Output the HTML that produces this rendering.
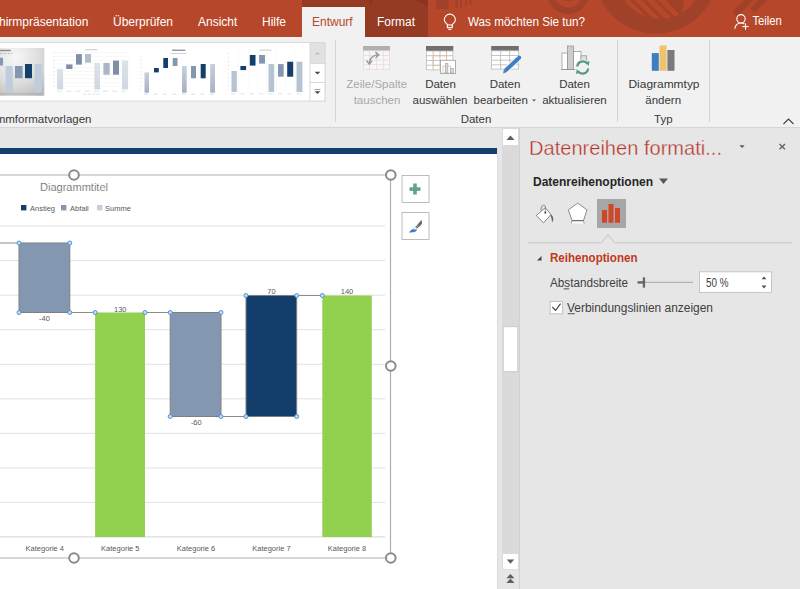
<!DOCTYPE html>
<html><head><meta charset="utf-8">
<style>
*{margin:0;padding:0}
html,body{width:800px;height:589px;overflow:hidden;background:#e6e6e6}
svg{display:block;font-family:"Liberation Sans",sans-serif}
</style></head><body>
<svg width="800" height="589" viewBox="0 0 800 589">
<!-- ================= TAB BAR ================= -->
<rect x="0" y="0" width="800" height="37" fill="#b7472a"/>
<defs><clipPath id="inner"><circle cx="660" cy="-24" r="43"/></clipPath></defs>
<g fill="#a0412a">
  <!-- big disc -->
  <circle cx="656" cy="-27.8" r="61.5"/>
  <!-- small ring -->
  <path d="M547.5,-6.5 a20.7,20.7 0 1,0 41.4,0 a20.7,20.7 0 1,0 -41.4,0 Z M554.2,-6.5 a14,14 0 1,1 28,0 a14,14 0 1,1 -28,0 Z" fill-rule="evenodd"/>
  <circle cx="568.2" cy="-6.5" r="7.6"/>
  <!-- small vertical stripes -->
  <rect x="436.3" y="0" width="12" height="9"/>
  <rect x="455.5" y="0" width="2" height="8"/>
  <rect x="460" y="0" width="2" height="7"/>
  <rect x="465" y="0" width="2" height="6"/>
  <rect x="469.5" y="0" width="2" height="5"/>
</g>
<g clip-path="url(#inner)" stroke="#b7472a" stroke-width="5.3" fill="none">
  <line x1="622" y1="-4" x2="646" y2="20"/>
  <line x1="634" y1="-4" x2="658" y2="20"/>
  <line x1="646" y1="-4" x2="670" y2="20"/>
  <line x1="657.5" y1="-4" x2="681.5" y2="20"/>
  <polygon points="684,-2 710,-2 682,12" fill="#b7472a" stroke="none"/>
</g>
<g stroke="#a0412a" stroke-width="6.5" fill="none">
  <line x1="753" y1="-4" x2="734.5" y2="14.5"/>
  <line x1="767" y1="-4" x2="752.5" y2="10.5"/>
</g>
<!-- contextual tab group -->
<rect x="302" y="0" width="126" height="37" fill="#963b23"/>
<polygon points="369,0 372.5,0 372.5,4 369,4" fill="#8a3520"/>
<polygon points="414,0 428,0 428,6" fill="#8a3520"/>
<!-- selected tab -->
<rect x="302" y="7" width="63" height="31" fill="#f1f1f1"/>
<g font-size="12" fill="#ffffff">
  <text x="-1" y="26">hirmpräsentation</text>
  <text x="113" y="26">Überprüfen</text>
  <text x="198" y="26">Ansicht</text>
  <text x="262" y="26">Hilfe</text>
  <text x="312" y="26" fill="#b7472a">Entwurf</text>
  <text x="377" y="26">Format</text>
  <text x="468" y="26" textLength="117" lengthAdjust="spacingAndGlyphs">Was möchten Sie tun?</text>
  <text x="752.4" y="25.3" textLength="29.5" lengthAdjust="spacingAndGlyphs">Teilen</text>
</g>
<!-- bulb -->
<g fill="none" stroke="#fff" stroke-width="1.1">
  <path d="M447.4,25.4 L447.3,24.6 C446.6,23.4 444.3,22.3 444.3,19.7 A5.55,5.55 0 0 1 455.4,19.7 C455.4,22.3 453.1,23.4 452.4,24.6 L452.3,25.4"/>
  <rect x="447.4" y="25" width="4.9" height="2.6"/>
  <line x1="448.3" y1="29.4" x2="451.4" y2="29.4"/>
</g>
<!-- person -->
<g fill="none" stroke="#fff" stroke-width="1.1">
  <circle cx="741" cy="18.8" r="4.2"/>
  <path d="M734.8,28.8 C735.3,25 738,23 741.2,23 C742.6,23 743.6,23.4 744.4,24"/>
  <line x1="742.3" y1="26.6" x2="748.7" y2="26.6"/>
  <line x1="745.5" y1="23.4" x2="745.5" y2="29.8"/>
</g>

<!-- ================= RIBBON ================= -->
<rect x="0" y="37" width="800" height="90" fill="#f1f1f1"/>
<rect x="0" y="127" width="800" height="1" fill="#d6d6d6"/>
<!-- gallery -->
<rect x="-1" y="42.5" width="326" height="58.5" fill="#ffffff" stroke="#dadada" stroke-width="1"/>
<rect x="310" y="42.5" width="15" height="21" fill="#e1e1e1" stroke="#dadada"/>
<rect x="310" y="63.5" width="15" height="19" fill="#fff" stroke="#dadada"/>
<rect x="310" y="82.5" width="15" height="18.5" fill="#fff" stroke="#dadada"/>
<polygon points="314.8,54.5 320.2,54.5 317.5,52" fill="#bdbdbd"/>
<polygon points="314.6,71.7 320.4,71.7 317.5,74.5" fill="#4a4a4a"/>
<rect x="314.6" y="89" width="5.8" height="0.8" fill="#8a8a8a"/>
<polygon points="314.6,91.2 320.4,91.2 317.5,94" fill="#4a4a4a"/>

<!-- thumbnail 1 (selected, gradient) -->
<defs>
  <radialGradient id="tg1" cx="0.35" cy="0.2" r="0.95">
    <stop offset="0" stop-color="#f7f7f7"/>
    <stop offset="0.6" stop-color="#dcdcdc"/>
    <stop offset="1" stop-color="#b9b9b9"/>
  </radialGradient>
  <linearGradient id="lb" x1="0" y1="0" x2="0" y2="1">
    <stop offset="0" stop-color="#c3cfdd"/>
    <stop offset="1" stop-color="#aebccd"/>
  </linearGradient>
</defs>
<rect x="0" y="48" width="44.3" height="47.8" fill="url(#tg1)"/>
<g>
  <rect x="0" y="57.8" width="3" height="7.7" fill="#8497b0"/>
  <rect x="5.6" y="66" width="7.1" height="26.4" fill="#bfccdb"/>
  <rect x="15" y="66" width="7.6" height="12.2" fill="#8497b0"/>
  <rect x="25" y="64" width="7" height="14.2" fill="#143f6d"/>
  <rect x="34.6" y="64" width="7.2" height="28.4" fill="#bfccdb"/>
  <rect x="0" y="49.8" width="10.8" height="1.4" fill="#8c8c8c"/>
  <line x1="0" y1="53.5" x2="12.5" y2="53.5" stroke="#b4b4b4" stroke-width="0.8" stroke-dasharray="2.5,1.2"/>
  <rect x="0" y="93.5" width="42" height="0.8" fill="#9a9a9a" opacity="0.6"/>
</g>
<!-- thumbnail 2 -->
<defs>
  <linearGradient id="g3" x1="0" y1="0" x2="0" y2="1">
    <stop offset="0" stop-color="#c7d1dd"/><stop offset="1" stop-color="#a3b1c2"/>
  </linearGradient>
  <linearGradient id="g2" x1="0" y1="0" x2="0" y2="1">
    <stop offset="0" stop-color="#dde3ea"/><stop offset="1" stop-color="#cfd7e1"/>
  </linearGradient>
</defs>
<g>
  <rect x="85" y="49.2" width="12.5" height="1.1" fill="#cfcfcf"/>
  <g fill="#f0f0f0">
    <rect x="55.6" y="52.5" width="74.5" height="0.5"/><rect x="55.6" y="56.2" width="74.5" height="0.5"/>
    <rect x="55.6" y="60" width="74.5" height="0.5"/><rect x="55.6" y="63.7" width="74.5" height="0.5"/>
    <rect x="55.6" y="67.4" width="74.5" height="0.5"/><rect x="55.6" y="71.1" width="74.5" height="0.5"/>
    <rect x="55.6" y="74.8" width="74.5" height="0.5"/><rect x="55.6" y="78.5" width="74.5" height="0.5"/>
    <rect x="55.6" y="82.2" width="74.5" height="0.5"/><rect x="55.6" y="86" width="74.5" height="0.5"/>
  </g>
  <line x1="54" y1="52.5" x2="54" y2="90" stroke="#cfcfcf" stroke-width="0.9" stroke-dasharray="0.8,2.9"/>
  <rect x="57.1" y="69" width="6" height="20.4" fill="url(#g2)"/>
  <rect x="66.2" y="64.4" width="6.3" height="4.6" fill="#7f8fa9"/>
  <rect x="76" y="54.1" width="5.9" height="10.5" fill="#7f8fa9"/>
  <rect x="85" y="54.1" width="6" height="8.6" fill="#b3becd"/>
  <rect x="94.4" y="62.9" width="5.6" height="26.5" fill="url(#g2)"/>
  <rect x="103.4" y="62.9" width="6.3" height="11.8" fill="#aab6c7"/>
  <rect x="113" y="60.6" width="6" height="14.1" fill="#7f8fa9"/>
  <rect x="122" y="60.6" width="6" height="28.8" fill="url(#g2)"/>
  <line x1="57" y1="91.2" x2="130" y2="91.2" stroke="#d6d6d6" stroke-width="0.7" stroke-dasharray="5,4.2"/>
  <line x1="83" y1="94.2" x2="100" y2="94.2" stroke="#d6d6d6" stroke-width="0.7" stroke-dasharray="3,1.5"/>
</g>
<!-- thumbnail 3 -->
<g>
  <rect x="172" y="49.6" width="13.5" height="1.3" fill="#8f8f8f"/>
  <rect x="170.5" y="53.1" width="16" height="0.8" fill="#c2c9d3"/>
  <line x1="141" y1="56" x2="141" y2="93" stroke="#cdcdcd" stroke-width="0.9" stroke-dasharray="0.8,2.9"/>
  <rect x="144.5" y="72.4" width="4.5" height="20.3" fill="url(#g3)"/>
  <rect x="154" y="68" width="4.8" height="4.4" fill="#143f6d"/>
  <rect x="163.3" y="58" width="4.7" height="10" fill="#143f6d"/>
  <rect x="172.7" y="58" width="4.8" height="8" fill="#8497b0"/>
  <rect x="182" y="66" width="4.7" height="26.7" fill="url(#g3)"/>
  <rect x="191" y="66" width="5" height="12.3" fill="#8497b0"/>
  <rect x="200.7" y="64" width="5" height="14.3" fill="#143f6d"/>
  <rect x="210.2" y="64" width="4.8" height="28.7" fill="url(#g3)"/>
  <line x1="144" y1="94.2" x2="216" y2="94.2" stroke="#cfcfcf" stroke-width="0.7" stroke-dasharray="4,5.4"/>
</g>
<!-- thumbnail 4 -->
<g>
  <rect x="259.6" y="49.6" width="12" height="1.1" fill="#cccccc"/>
  <g fill="#f2f2f2">
    <rect x="238.5" y="52" width="0.5" height="40"/><rect x="247.8" y="52" width="0.5" height="40"/>
    <rect x="257.2" y="52" width="0.5" height="40"/><rect x="266.6" y="52" width="0.5" height="40"/>
    <rect x="276" y="52" width="0.5" height="40"/><rect x="285.4" y="52" width="0.5" height="40"/>
    <rect x="294.8" y="52" width="0.5" height="40"/>
  </g>
  <line x1="228.5" y1="53" x2="228.5" y2="93" stroke="#cdcdcd" stroke-width="0.9" stroke-dasharray="0.8,3.2"/>
  <rect x="231.5" y="71" width="5.3" height="21" fill="#b6c3d3"/>
  <rect x="240.4" y="66" width="5.7" height="4.1" fill="#143f6d"/>
  <rect x="249.8" y="55" width="5.7" height="10.6" fill="#143f6d"/>
  <rect x="259.1" y="55" width="5.9" height="8.6" fill="#8497b0"/>
  <rect x="268.5" y="64.1" width="5.7" height="27.9" fill="#b6c3d3"/>
  <rect x="278" y="64.1" width="5.7" height="12.6" fill="#8497b0"/>
  <rect x="287.2" y="61.7" width="6" height="15" fill="#143f6d"/>
  <rect x="296.5" y="61.7" width="5.9" height="30.3" fill="#b6c3d3"/>
  <line x1="231" y1="93.8" x2="303" y2="93.8" stroke="#d3d3d3" stroke-width="0.7" stroke-dasharray="4,5.4"/>
</g>

<!-- separators -->
<rect x="335" y="40" width="1" height="82" fill="#d4d4d4"/>
<rect x="617" y="40" width="1" height="82" fill="#d4d4d4"/>
<rect x="709" y="40" width="1" height="82" fill="#d4d4d4"/>

<!-- ribbon texts -->
<g font-size="11.5" fill="#383838" text-anchor="middle">
  <text x="91.5" y="123" text-anchor="end">ammformatvorlagen</text>
  <text x="376.7" y="88.4" fill="#a8a8a8">Zeile/Spalte</text>
  <text x="377" y="103.8" fill="#a8a8a8">tauschen</text>
  <text x="440.5" y="88.4">Daten</text>
  <text x="440" y="103.8">auswählen</text>
  <text x="505" y="88.4">Daten</text>
  <text x="500.7" y="103.8">bearbeiten</text>
  <text x="574.5" y="88.4">Daten</text>
  <text x="574.5" y="103.8">aktualisieren</text>
  <text x="664" y="88.4" textLength="71" lengthAdjust="spacingAndGlyphs">Diagrammtyp</text>
  <text x="663.2" y="103.8">ändern</text>
  <text x="476" y="123">Daten</text>
  <text x="663.3" y="123">Typ</text>
</g>
<polygon points="532,99.5 536,99.5 534,101.5" fill="#555"/>
<!-- collapse chevron -->
<polyline points="783.5,124 788.5,119 793.5,124" fill="none" stroke="#444" stroke-width="1.1"/>

<!-- icon: Zeile/Spalte tauschen (disabled) -->
<g>
  <rect x="363" y="46" width="27" height="23.6" fill="#faf6f8"/>
  <rect x="363" y="46" width="27" height="4.8" fill="#b0b0b0"/>
  <g stroke="#e2dadd" stroke-width="0.8" fill="none">
    <rect x="363.4" y="50.8" width="26.2" height="18.5"/>
    <line x1="369.6" y1="50.8" x2="369.6" y2="69.3"/><line x1="376.6" y1="50.8" x2="376.6" y2="69.3"/><line x1="383.6" y1="50.8" x2="383.6" y2="69.3"/>
    <line x1="363.4" y1="55.4" x2="389.6" y2="55.4"/><line x1="363.4" y1="60" x2="389.6" y2="60"/><line x1="363.4" y1="64.7" x2="389.6" y2="64.7"/>
  </g>
  <g fill="none" stroke="#9c9c9c" stroke-width="1.5" stroke-linecap="round" stroke-linejoin="round">
    <path d="M369.3,63.8 C369.4,59.5 371,55.6 378.4,54.8"/>
    <polyline points="375.8,52.4 378.8,54.8 376.1,57.6"/>
    <polyline points="366.7,61 369.3,63.9 371.8,61.2"/>
  </g>
</g>

<!-- icon: Daten auswählen -->
<g>
  <rect x="426" y="46" width="27.3" height="24.3" fill="#fff"/>
  <rect x="426" y="46" width="27.3" height="5" fill="#6f6f6f"/>
  <g stroke="#b8b8b8" stroke-width="0.8" fill="none">
    <rect x="426.4" y="51" width="26.5" height="18.9"/>
    <line x1="433.2" y1="51" x2="433.2" y2="69.9"/><line x1="440" y1="51" x2="440" y2="69.9"/><line x1="446.6" y1="51" x2="446.6" y2="69.9"/>
    <line x1="426.4" y1="55.7" x2="452.9" y2="55.7"/><line x1="426.4" y1="60.5" x2="452.9" y2="60.5"/><line x1="426.4" y1="65.2" x2="452.9" y2="65.2"/>
  </g>
  <rect x="433" y="55.8" width="13.5" height="9.8" fill="none" stroke="#f3b27a" stroke-width="0.8" stroke-dasharray="1.4,0.6"/>
  <rect x="440.5" y="60.3" width="15" height="13.2" fill="#fff" stroke="#a6a6a6" stroke-width="0.9"/>
  <rect x="443" y="66.2" width="2.4" height="6.8" fill="#fff" stroke="#b4b4b4" stroke-width="0.6"/>
  <rect x="445.4" y="63.6" width="2.5" height="9.4" fill="#d8d8d8" stroke="#a0a0a0" stroke-width="0.6"/>
  <rect x="447.9" y="66" width="2.9" height="7" fill="#fff" stroke="#b4b4b4" stroke-width="0.6"/>
  <rect x="450.8" y="68.4" width="2.5" height="4.6" fill="#d8d8d8" stroke="#a0a0a0" stroke-width="0.6"/>
</g>

<!-- icon: Daten bearbeiten -->
<g>
  <rect x="491.2" y="46" width="27.6" height="23.5" fill="#fff"/>
  <rect x="491.2" y="46" width="27.6" height="4.8" fill="#6f6f6f"/>
  <g stroke="#b8b8b8" stroke-width="0.8" fill="none">
    <rect x="491.6" y="50.8" width="26.8" height="18.3"/>
    <line x1="500.6" y1="50.8" x2="500.6" y2="69.1"/><line x1="509.6" y1="50.8" x2="509.6" y2="69.1"/>
    <line x1="491.6" y1="55.5" x2="518.4" y2="55.5"/><line x1="491.6" y1="60.2" x2="518.4" y2="60.2"/><line x1="491.6" y1="64.8" x2="518.4" y2="64.8"/>
  </g>
  <line x1="504.8" y1="71.2" x2="518.4" y2="58.4" stroke="#f1f1f1" stroke-width="6.5"/>
  <line x1="505.3" y1="70.7" x2="517.3" y2="59.5" stroke="#3d7ec4" stroke-width="3.8"/>
  <line x1="516.3" y1="60.5" x2="519.3" y2="57.6" stroke="#3d7ec4" stroke-width="3.8" stroke-linecap="round"/>
  <polygon points="503.2,73.6 503.9,69.2 506.7,72.1" fill="#3d7ec4"/>
</g>

<!-- icon: Daten aktualisieren -->
<g>
  <rect x="562" y="53" width="5.6" height="16.5" fill="#fff" stroke="#8f8f8f" stroke-width="0.7"/>
  <rect x="567.6" y="46" width="6" height="23.5" fill="#cdcdcd" stroke="#8f8f8f" stroke-width="0.7"/>
  <rect x="573.6" y="51.5" width="7.4" height="18" fill="#fff" stroke="#8f8f8f" stroke-width="0.7"/>
  <rect x="581" y="55.8" width="5.7" height="13.7" fill="#e0e0e0" stroke="#8f8f8f" stroke-width="0.7"/>
  <line x1="561" y1="69.5" x2="576" y2="69.5" stroke="#8f8f8f" stroke-width="0.8"/>
  <circle cx="582.7" cy="67.5" r="8" fill="#f1f1f1"/>
  <path d="M577.3,66.5 A5.6,5.6 0 0 1 587.5,63.8" fill="none" stroke="#559d82" stroke-width="2.3"/>
  <path d="M588.1,68.5 A5.6,5.6 0 0 1 577.9,71.2" fill="none" stroke="#559d82" stroke-width="2.3"/>
  <polygon points="585.5,62.5 589.5,61 588.8,66" fill="#559d82"/>
  <polygon points="580,72.5 576,74 576.7,69" fill="#559d82"/>
</g>

<!-- icon: Diagrammtyp ändern -->
<g>
  <rect x="651.8" y="53.1" width="7" height="17.7" fill="#3f7dc1"/>
  <rect x="659.5" y="45.5" width="7.1" height="25.3" fill="#eec26f"/>
  <rect x="667.4" y="50" width="7.1" height="20.8" fill="#7a7a7a"/>
</g>

<!-- ================= SLIDE AREA ================= -->
<rect x="0" y="148" width="497" height="441" fill="#ffffff"/>
<rect x="0" y="148" width="497" height="6" fill="#143f6d"/>

<!-- gridlines -->
<g fill="#e2e2e2">
  <rect x="0" y="225.6" width="385" height="1"/>
  <rect x="0" y="260.1" width="385" height="1"/>
  <rect x="0" y="294.7" width="385" height="1"/>
  <rect x="0" y="329.2" width="385" height="1"/>
  <rect x="0" y="363.8" width="385" height="1"/>
  <rect x="0" y="398.3" width="385" height="1"/>
  <rect x="0" y="432.8" width="385" height="1"/>
  <rect x="0" y="467.4" width="385" height="1"/>
  <rect x="0" y="501.9" width="385" height="1"/>
  <rect x="0" y="536.1" width="385" height="1.6" fill="#e4e4e4"/>
</g>

<!-- connector lines -->
<g stroke="#8c8c8c" stroke-width="1" fill="none">
  <line x1="0" y1="243" x2="19" y2="243"/>
  <line x1="69.8" y1="312.5" x2="95.1" y2="312.5"/>
  <line x1="145" y1="312.5" x2="170.2" y2="312.5"/>
  <line x1="221" y1="416.5" x2="246" y2="416.5"/>
  <line x1="296.7" y1="295.5" x2="322.3" y2="295.5"/>
</g>
<!-- bars -->
<rect x="19" y="243" width="50.8" height="69.5" fill="#8497b0" stroke="#7f7f7f" stroke-width="1"/>
<rect x="95.1" y="312.5" width="49.9" height="224.5" fill="#92d050"/>
<rect x="170.2" y="312.5" width="50.8" height="104" fill="#8497b0" stroke="#7f7f7f" stroke-width="1"/>
<rect x="246" y="295.5" width="50.7" height="121" fill="#133e6c" stroke="#7f7f7f" stroke-width="1"/>
<rect x="322.3" y="295.5" width="49.5" height="241.5" fill="#92d050"/>

<!-- handles -->
<g fill="#c6ddf4" stroke="#4a8fd4" stroke-width="0.95">
  <circle cx="19" cy="243" r="2"/><circle cx="69.8" cy="243" r="2"/>
  <circle cx="19" cy="312.5" r="2"/><circle cx="69.8" cy="312.5" r="2"/>
  <circle cx="95.1" cy="312.5" r="2"/><circle cx="145" cy="312.5" r="2"/>
  <circle cx="170.2" cy="312.5" r="2"/><circle cx="221" cy="312.5" r="2"/>
  <circle cx="170.2" cy="416.5" r="2"/><circle cx="221" cy="416.5" r="2"/>
  <circle cx="246" cy="416.5" r="2"/><circle cx="296.7" cy="416.5" r="2"/>
  <circle cx="246" cy="295.5" r="2"/><circle cx="296.7" cy="295.5" r="2"/>
  <circle cx="322.3" cy="295.5" r="2"/>
</g>

<!-- chart text -->
<g fill="#595959" font-size="7.5" text-anchor="middle">
  <text x="44.5" y="321">-40</text>
  <text x="120.3" y="311.5">130</text>
  <text x="196.3" y="425">-60</text>
  <text x="271.4" y="293.8">70</text>
  <text x="347" y="293.8">140</text>
  <text x="44.8" y="551.3">Kategorie 4</text>
  <text x="120.3" y="551.3">Kategorie 5</text>
  <text x="196" y="551.3">Kategorie 6</text>
  <text x="271.4" y="551.3">Kategorie 7</text>
  <text x="347" y="551.3">Kategorie 8</text>
</g>
<text x="40" y="191.4" fill="#5e5e5e" stroke="#fff" stroke-width="0.2" font-size="11.8" textLength="68" lengthAdjust="spacingAndGlyphs">Diagrammtitel</text>
<g fill="#595959" font-size="7.5">
  <rect x="21" y="205" width="5.4" height="5.4" fill="#133e6c"/>
  <text x="30" y="211">Anstieg</text>
  <rect x="61" y="205" width="5.4" height="5.4" fill="#8497b0"/>
  <text x="70" y="211">Abfall</text>
  <rect x="97" y="205" width="5.4" height="5.4" fill="#c3d1e2"/>
  <text x="105" y="211">Summe</text>
</g>

<!-- frame -->
<g stroke="#b0b0b0" stroke-width="1.2" fill="none">
  <line x1="0" y1="175" x2="390.5" y2="175"/>
  <line x1="390.5" y1="175" x2="390.5" y2="558"/>
  <line x1="0" y1="558" x2="390.5" y2="558"/>
</g>
<g fill="#fff" stroke="#8a8a8a" stroke-width="2">
  <circle cx="74" cy="175" r="4.8"/>
  <circle cx="390.8" cy="175" r="4.8"/>
  <circle cx="390.8" cy="366" r="4.8"/>
  <circle cx="390.8" cy="558" r="4.8"/>
  <circle cx="74" cy="558" r="4.8"/>
</g>

<!-- chart side buttons -->
<rect x="402" y="175.5" width="27" height="27" fill="#fff" stroke="#bdbdbd" stroke-width="1"/>
<rect x="402" y="212.5" width="27" height="27" fill="#fff" stroke="#bdbdbd" stroke-width="1"/>
<g fill="#65a28a">
  <rect x="409.5" y="187.3" width="11" height="3.6"/>
  <rect x="413.2" y="183.5" width="3.6" height="11"/>
</g>
<g>
  <polygon points="421.7,219.8 422,223.8 418.6,227.4 416.6,225.4" fill="#6a6a6a"/>
  <polygon points="416.3,225.8 418.2,227.7 417.3,228.6 415.4,226.7" fill="#606060"/>
  <path d="M414.6,227.3 C416,227.6 416.8,228.4 416.9,229.6 L413.2,230 C413,228.8 413.6,227.8 414.6,227.3 Z" fill="#f2f7fc" stroke="#7fb0e0" stroke-width="0.5"/>
  <path d="M412.3,229.2 L416.9,229.8 C416.4,231.6 414.6,232.6 408.8,232.6 C409.8,231.2 410.8,229.9 412.3,229.2 Z" fill="#3f7dc1"/>
</g>

<!-- ================= SCROLLBAR ================= -->
<rect x="502" y="128" width="18" height="441.5" fill="#dadada"/>
<rect x="519" y="128" width="1" height="461" fill="#d2d2d2"/>
<rect x="497" y="148" width="1" height="441" fill="#dcdcdc"/>
<rect x="503" y="129" width="15" height="16" fill="#fff"/>
<polygon points="506.5,140 514.5,140 510.5,135.5" fill="#5f5f5f"/>
<rect x="503.2" y="326.7" width="14.6" height="45" fill="#fff" stroke="#c8c8c8" stroke-width="0.9"/>
<rect x="503" y="554" width="15" height="15" fill="#fff"/>
<polygon points="506.8,559.6 514.2,559.6 510.5,563.8" fill="#5f5f5f"/>
<polygon points="506.3,578.3 514.5,578.3 510.4,574" fill="#5f5f5f"/>
<polygon points="506.3,583 514.5,583 510.4,578.6" fill="#5f5f5f"/>

<!-- ================= TASK PANE ================= -->
<text x="529" y="155.3" font-size="21" fill="#b5342a" stroke="#e6e6e6" stroke-width="0.35" textLength="193" lengthAdjust="spacingAndGlyphs">Datenreihen formati...</text>
<polygon points="739.5,145.3 744.7,145.3 742.1,148" fill="#595959"/>
<g stroke="#606060" stroke-width="1.25">
  <line x1="779.5" y1="144" x2="785" y2="149.3"/>
  <line x1="785" y1="144" x2="779.5" y2="149.3"/>
</g>
<text x="533" y="186" font-size="12" font-weight="bold" fill="#262626">Datenreihenoptionen</text>
<polygon points="659,178.5 668,178.5 663.5,184" fill="#595959"/>

<!-- pane icons -->
<rect x="597" y="199" width="29" height="29" fill="#a6a6a6"/>
<g fill="#d04727">
  <rect x="602" y="210" width="5" height="12.7"/>
  <rect x="608.5" y="204" width="5" height="18.7"/>
  <rect x="615" y="208" width="5" height="14.7"/>
</g>
<!-- pentagon -->
<g>
  <rect x="572" y="220.6" width="11.5" height="3" fill="#fafafa"/>
  <polygon points="577.7,203.2 587,209.8 583.5,220.6 572,220.6 568.4,209.8" fill="#fff" stroke="#808080" stroke-width="0.9" stroke-linejoin="round"/>
  <line x1="572" y1="220.6" x2="583.5" y2="220.6" stroke="#6e6e6e" stroke-width="1.1"/>
  <line x1="572" y1="220.8" x2="571.2" y2="223.6" stroke="#8a8a8a" stroke-width="0.7"/>
  <line x1="583.5" y1="220.8" x2="584.3" y2="223.6" stroke="#8a8a8a" stroke-width="0.7"/>
</g>
<!-- paint bucket -->
<g>
  <polygon points="536.2,215.5 545.3,207.7 551,214.6 543.5,222.8" fill="#fff" stroke="#7a7a7a" stroke-width="0.9" stroke-linejoin="round"/>
  <path d="M541.2,210.6 C540.8,208 541.6,205.2 543.6,205.2 C545.3,205.2 545.8,207 545.3,208" fill="none" stroke="#7a7a7a" stroke-width="0.9"/>
  <line x1="545.3" y1="208" x2="545.3" y2="212" stroke="#7a7a7a" stroke-width="0.8"/>
  <circle cx="545.3" cy="212.6" r="1.1" fill="#505050"/>
  <path d="M550.6,214.2 C552.6,215.5 553.6,217.8 553.2,220 C553,221 552.6,221.8 552,222.4 C552,220 551.6,217.6 550.3,215.2 Z" fill="#606060"/>
</g>
<!-- separator with notch -->
<polyline points="528,242.8 601.5,242.8 608,234.8 614.6,242.8 792,242.8" fill="none" stroke="#c6c6c6" stroke-width="1"/>

<!-- section -->
<polygon points="537,260.5 541.5,260.5 541.5,256" fill="#444"/>
<text x="550" y="262.2" font-size="12.4" font-weight="bold" fill="#c0391b" textLength="87.5" lengthAdjust="spacingAndGlyphs">Reihenoptionen</text>
<text x="550" y="286.6" font-size="12" fill="#404040" textLength="78" lengthAdjust="spacingAndGlyphs">Abstandsbreite</text>
<rect x="563.6" y="288.4" width="5.5" height="0.9" fill="#404040"/>
<!-- slider -->
<rect x="644" y="281.8" width="49" height="1" fill="#a6a6a6"/>
<rect x="637.5" y="281.2" width="6" height="2.4" fill="#666"/>
<rect x="642.8" y="277.3" width="2.3" height="10.3" fill="#666"/>
<!-- spin box -->
<rect x="699.5" y="271.8" width="72" height="20.6" fill="#fff" stroke="#c6c6c6" stroke-width="1"/>
<text x="706" y="286.6" font-size="12" fill="#404040" textLength="22.5" lengthAdjust="spacingAndGlyphs">50 %</text>
<polygon points="761.5,279.3 766.5,279.3 764,276.4" fill="#555"/>
<polygon points="761.5,285.6 766.5,285.6 764,288.5" fill="#555"/>
<!-- checkbox -->
<rect x="550.2" y="301.5" width="12.3" height="12.3" fill="#fff" stroke="#c3c3c3" stroke-width="1"/>
<polyline points="552.4,307 555.6,310.3 560.6,303.6" fill="none" stroke="#444" stroke-width="1.1"/>
<text x="567" y="311.6" font-size="12" fill="#404040" textLength="146" lengthAdjust="spacingAndGlyphs">Verbindungslinien anzeigen</text>
<rect x="567.8" y="313.3" width="7" height="0.9" fill="#404040"/>

</svg>
</body></html>
